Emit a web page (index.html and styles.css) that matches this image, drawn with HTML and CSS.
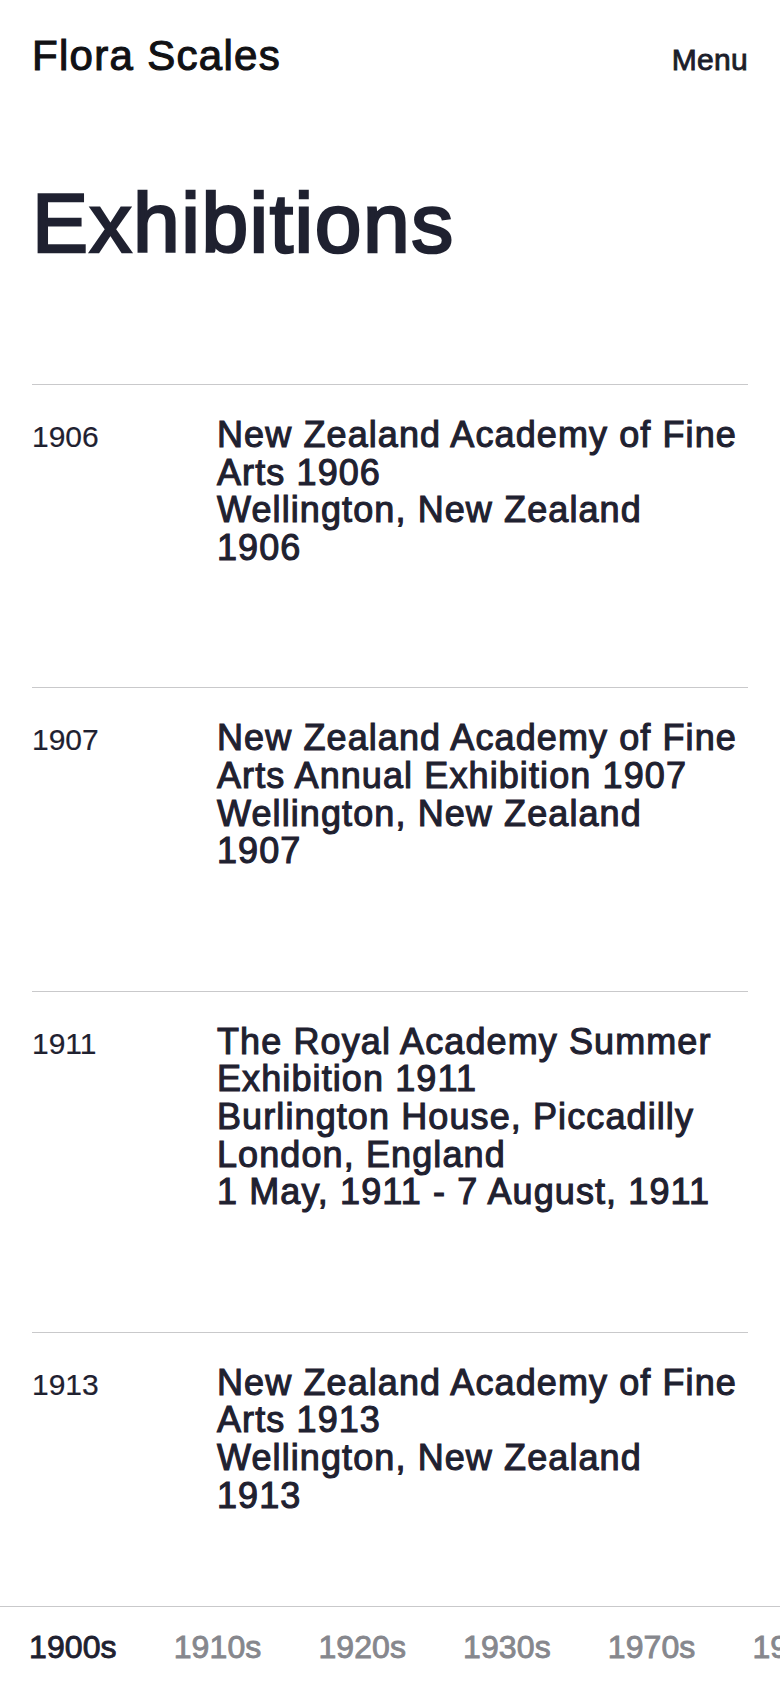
FILE: index.html
```html
<!DOCTYPE html>
<html lang="en">
<head>
<meta charset="utf-8">
<title>Exhibitions — Flora Scales</title>
<link rel="stylesheet" href="styles.css">
</head>
<body>
<header class="site-header">
  <a class="logo" href="#">Flora Scales</a>
  <button class="menu-btn" type="button">Menu</button>
</header>
<main class="page">
  <h1 class="page-title">Exhibitions</h1>
  <ul class="exhibitions">
    <li class="exhibition">
      <span class="year">1906</span>
      <div class="details">
        <div class="name">New Zealand Academy of Fine Arts 1906</div>
        <div class="place">Wellington, New Zealand</div>
        <div class="date">1906</div>
      </div>
    </li>
    <li class="exhibition">
      <span class="year">1907</span>
      <div class="details">
        <div class="name">New Zealand Academy of Fine Arts Annual Exhibition 1907</div>
        <div class="place">Wellington, New Zealand</div>
        <div class="date">1907</div>
      </div>
    </li>
    <li class="exhibition">
      <span class="year">1911</span>
      <div class="details">
        <div class="name">The Royal Academy Summer Exhibition 1911</div>
        <div class="place">Burlington House, Piccadilly</div>
        <div class="place">London, England</div>
        <div class="date">1 May, 1911 - 7 August, 1911</div>
      </div>
    </li>
    <li class="exhibition">
      <span class="year">1913</span>
      <div class="details">
        <div class="name">New Zealand Academy of Fine Arts 1913</div>
        <div class="place">Wellington, New Zealand</div>
        <div class="date">1913</div>
      </div>
    </li>
  </ul>
</main>
<nav class="decades">
  <a class="decade active" href="#">1900s</a>
  <a class="decade" href="#">1910s</a>
  <a class="decade" href="#">1920s</a>
  <a class="decade" href="#">1930s</a>
  <a class="decade" href="#">1970s</a>
  <a class="decade" href="#">1980s</a>
</nav>
</body>
</html>
```
FILE: styles.css
```css
* { box-sizing: border-box; }

html, body {
  margin: 0;
  padding: 0;
  background: #ffffff;
}

body {
  font-family: "Liberation Sans", Arial, Helvetica, sans-serif;
  color: #1f2130;
  padding-bottom: 90px;
}

a { color: inherit; text-decoration: none; }

.site-header {
  display: flex;
  justify-content: space-between;
  align-items: baseline;
  height: 80px;
  padding: 32px 32px 0 32px;
}

.logo {
  font-size: 42px;
  line-height: 48px;
  letter-spacing: 1.3px;
  color: #111114;
  -webkit-text-stroke: 1.1px #111114;
}

.menu-btn {
  font-family: inherit;
  font-size: 30px;
  line-height: 40px;
  letter-spacing: 0.3px;
  color: #1c1e2b;
  -webkit-text-stroke: 0.9px #1c1e2b;
  background: none;
  border: 0;
  padding: 0;
  margin: 0;
}

.page {
  padding: 0 32px;
}

.page-title {
  margin: 101px 0 0 0;
  font-size: 84px;
  line-height: 84px;
  font-weight: normal;
  letter-spacing: 1.5px;
  color: #1f2130;
  -webkit-text-stroke: 2.6px #1f2130;
}

.exhibitions {
  list-style: none;
  margin: 119px 0 0 0;
  padding: 0;
}

.exhibition {
  display: grid;
  grid-template-columns: 185px 1fr;
  align-items: baseline;
  border-top: 1px solid #c9c9cb;
  padding: 31px 0 121px 0;
}

.year {
  font-size: 30px;
  line-height: 37.6px;
  color: #1f2130;
  -webkit-text-stroke: 0.2px #1f2130;
}

.details {
  font-size: 36px;
  line-height: 37.6px;
  letter-spacing: 1.1px;
  color: #1f2130;
  -webkit-text-stroke: 1.1px #1f2130;
}

.decades {
  position: fixed;
  left: 0;
  right: 0;
  bottom: 0;
  height: 82px;
  background: #ffffff;
  border-top: 1px solid #c9c9cb;
  display: flex;
  gap: 57px;
  padding-left: 29px;
  overflow: hidden;
  white-space: nowrap;
}

.decade {
  font-size: 32px;
  line-height: 81px;
  letter-spacing: 0.1px;
  color: #86878d;
  -webkit-text-stroke: 0.9px #86878d;
}

.decade.active {
  color: #1f2130;
  -webkit-text-stroke: 0.9px #1f2130;
}
```
